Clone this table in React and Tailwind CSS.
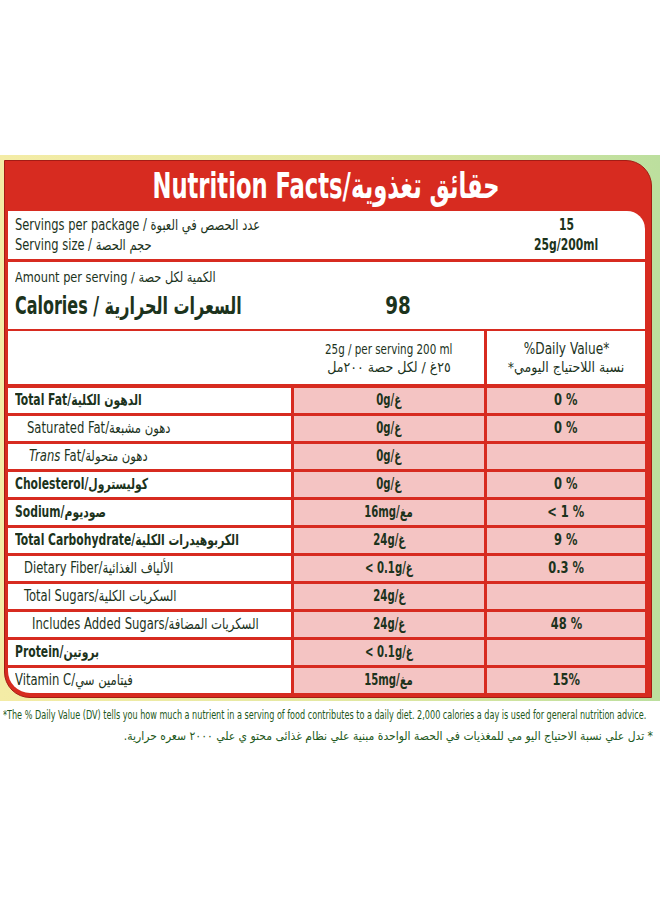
import React from "react";

const font = "font-['DejaVu_Sans_Condensed','DejaVu_Sans',sans-serif]";

const rows = [
  { en: "Total Fat", ar: "الدهون الكلية", amt: "0g/غ", dv: "0 %", bold: true, pad: "pl-[7px]" },
  { en: "Saturated Fat", ar: "دهون مشبعة", amt: "0g/غ", dv: "0 %", pad: "pl-[19px]" },
  { en: "Trans", rest: " Fat", ar: "دهون متحولة", amt: "0g/غ", dv: "", pad: "pl-[21px]" },
  { en: "Cholesterol", ar: "كوليسترول", amt: "0g/غ", dv: "0 %", bold: true, pad: "pl-[7px]" },
  { en: "Sodium", ar: "صوديوم", amt: "16mg/مغ", dv: "< 1 %", bold: true, pad: "pl-[7px]" },
  { en: "Total Carbohydrate", ar: "الكربوهيدرات الكلية", amt: "24g/غ", dv: "9 %", bold: true, pad: "pl-[7px]" },
  { en: "Dietary Fiber", ar: "الألياف الغذائية", amt: "< 0.1g/غ", dv: "0.3 %", pad: "pl-[16px]" },
  { en: "Total Sugars", ar: "السكريات الكلية", amt: "24g/غ", dv: "", pad: "pl-[16px]" },
  { en: "Includes Added Sugars", ar: "السكريات المضافة", amt: "24g/غ", dv: "48 %", pad: "pl-[24px]" },
  { en: "Protein", ar: "بروتين", amt: "< 0.1g/غ", dv: "", bold: true, pad: "pl-[7px]" },
  { en: "Vitamin C", ar: "فيتامين سي", amt: "15mg/مغ", dv: "15%", pad: "pl-[7px]", last: true },
];

function Row({ r }) {
  return (
    <>
      <div
        className={`bg-white h-[25px] flex items-center ${r.pad} ${
          r.last ? "rounded-bl-[22px]" : ""
        }`}
      >
        <span
          className={`inline-block whitespace-nowrap origin-left ${
            r.bold ? "font-bold scale-x-[0.8]" : "font-normal scale-x-[0.86]"
          }`}
        >
          {r.rest ? (
            <>
              <i>{r.en}</i>
              {r.rest}/{r.ar}
            </>
          ) : (
            <>
              {r.en}/{r.ar}
            </>
          )}
        </span>
      </div>
      <div className="bg-[#f4c4c3] h-[25px] flex items-center justify-center font-bold">
        <span className="inline-block whitespace-nowrap scale-x-[0.75]">{r.amt}</span>
      </div>
      <div className="bg-[#f4c4c3] h-[25px] flex items-center justify-center font-bold">
        <span className="inline-block whitespace-nowrap scale-x-[0.85]">{r.dv}</span>
      </div>
    </>
  );
}

export default function App() {
  return (
    <div className={`bg-white min-h-[900px] pt-[155px] overflow-hidden ${font} text-[#1c331c]`}>
      <div className="bg-linear-to-r from-[#f4eca6] via-[#e4e8a2] to-[#bcdf9e] pt-[5px] pl-[4px] pr-[8px] pb-[3px]">
        <div className="bg-[#d72b20] border border-[#a31c15] rounded-tr-[26px] rounded-bl-[26px] pl-[3px] pr-[6px] pb-[4px]">
          <div className="h-[50px] flex items-center justify-center text-white font-bold text-[36px] leading-none">
            <span className="inline-block whitespace-nowrap scale-x-[0.7]">
              Nutrition Facts/حقائق تغذوية
            </span>
          </div>

          <div className="bg-white rounded-tr-[18px] h-[48px] flex text-[15px]">
            <div className="flex-1 pl-[7px] flex flex-col justify-center leading-[20px]">
              <span className="inline-block whitespace-nowrap origin-left scale-x-[0.85]">
                Servings per package / عدد الحصص في العبوة
              </span>
              <span className="inline-block whitespace-nowrap origin-left scale-x-[0.85]">
                Serving size / حجم الحصة
              </span>
            </div>
            <div className="w-[158px] flex flex-col justify-center items-center leading-[20px] font-bold">
              <span className="inline-block scale-x-[0.8]">15</span>
              <span className="inline-block scale-x-[0.8]">25g/200ml</span>
            </div>
          </div>

          <div className="mt-[3px] bg-white h-[67px] flex flex-col pl-[7px]">
            <div className="text-[14px] pt-[6px] leading-[18px]">
              <span className="inline-block whitespace-nowrap origin-left scale-x-[0.9]">
                Amount per serving / الكمية لكل حصة
              </span>
            </div>
            <div className="flex items-center mt-[5px]">
              <div className="w-[368px] text-[24px] font-bold leading-[30px]">
                <span className="inline-block whitespace-nowrap origin-left scale-x-[0.74]">
                  Calories / السعرات الحرارية
                </span>
              </div>
              <div className="text-[24px] font-bold leading-[30px]">
                <span className="inline-block scale-x-[0.85]">98</span>
              </div>
            </div>
          </div>

          <div className="mt-[2px] flex gap-[3px] h-[53px] text-[14px]">
            <div className="w-[476px] bg-white flex">
              <div className="w-[286px]" />
              <div className="w-[190px] flex flex-col items-center justify-center leading-[18px]">
                <span className="inline-block whitespace-nowrap scale-x-[0.82]">
                  25g / per serving 200 ml
                </span>
                <span dir="rtl" className="inline-block whitespace-nowrap">
                  ٢٥غ / لكل حصة ٢٠٠مل
                </span>
              </div>
            </div>
            <div className="flex-1 bg-white flex flex-col items-center justify-center leading-[18px]">
              <span className="inline-block whitespace-nowrap text-[15px] scale-x-[0.9]">
                %Daily Value*
              </span>
              <span dir="rtl" className="inline-block whitespace-nowrap">
                نسبة اللاحتياج اليومي*
              </span>
            </div>
          </div>

          <div className="mt-[4px] grid grid-cols-[283px_190px_1fr] gap-[3px] text-[15px]">
            {rows.map((r) => (
              <Row key={r.en} r={r} />
            ))}
          </div>
        </div>
      </div>

      <div className="pt-[6px] px-[3px] text-[#1d5820] overflow-hidden">
        <div className="text-[12px] leading-[16px] whitespace-nowrap overflow-hidden">
          <span className="inline-block origin-left scale-x-[0.75]">
            *The % Daily Value (DV) tells you how much a nutrient in a serving of food contributes to a daily diet. 2,000 calories a day is used for general nutrition advice.
          </span>
        </div>
        <div dir="rtl" className="text-[12px] leading-[20px] mt-[3px] pr-[4px]">
          * تدل علي نسبة الاحتياج اليو مي للمغذيات في الحصة الواحدة مبنية علي نظام غذائى محتو ي علي ٢٠٠٠ سعره حرارية.
        </div>
      </div>
    </div>
  );
}
